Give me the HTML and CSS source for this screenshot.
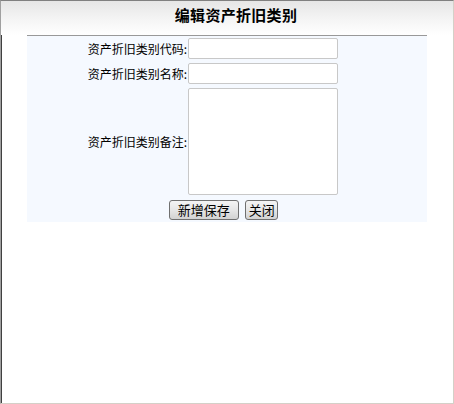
FILE: index.html
```html
<!DOCTYPE html>
<html lang="zh-CN">
<head>
  <meta charset="UTF-8" />
  <title>编辑资产折旧类别</title>
  <link rel="stylesheet" href="styles.css">
</head>
<body>
  <div class="frame">
    <div class="title-bar">编辑资产折旧类别</div>

    <table class="edit-table">
      <tr>
        <td class="label">资产折旧类别代码:</td>
        <td class="field"><input type="text" class="txt"></td>
      </tr>
      <tr>
        <td class="label">资产折旧类别名称:</td>
        <td class="field"><input type="text" class="txt"></td>
      </tr>
      <tr>
        <td class="label">资产折旧类别备注:</td>
        <td class="field"><textarea class="memo"></textarea></td>
      </tr>
      <tr>
        <td colspan="2" class="actions">
          <button class="btn btn-save">新增保存</button>
          <button class="btn btn-close">关闭</button>
        </td>
      </tr>
    </table>
  </div>
</body>
</html>
```

FILE: styles.css
```css
* {
  box-sizing: border-box;
}

html, body {
  margin: 0;
  padding: 0;
  height: 100%;
  background: #fff;
}

body {
  font-family: "Noto Sans CJK SC", "DejaVu Sans", sans-serif;
  font-size: 12px;
  color: #000;
}

.frame {
  height: 404px;
  border-top: 1px solid #808080;
  border-left: 1px solid #a0a0a0;
  border-right: 1px solid #d4d0c8;
  border-bottom: 1px solid #d4d0c8;
  box-shadow: inset 1px 1px 0 #404040;
}

.title-bar {
  height: 34px;
  padding: 4px 0 0 18px;
  text-align: center;
  font-size: 15px;
  font-weight: bold;
  line-height: 20px;
  letter-spacing: 0.3px;
  background: linear-gradient(to bottom, #e6e6e6 0%, #f6f6f6 60%, #fff 100%);
}

.edit-table {
  width: 400px;
  margin: 0 auto;
  border-collapse: collapse;
  border-top: 1px solid #999;
  background: #f5f9ff;
}

.edit-table td {
  padding: 0;
}

.label {
  width: 160px;
  text-align: right;
  vertical-align: middle;
  line-height: 16px;
}

.field {
  padding: 2px 0 2px 1px !important;
}

.txt {
  display: block;
  width: 150px;
  height: 21px;
  margin: 0;
  border: 1px solid #c8c8c8;
  border-radius: 2px;
  background: #fff;
}

.memo {
  display: block;
  width: 150px;
  height: 107px;
  margin: 0;
  border: 1px solid #c8c8c8;
  border-radius: 2px;
  background: #fff;
  resize: none;
}

.actions {
  text-align: center;
  padding: 3px 7px 2px 0 !important;
}

.btn {
  height: 20px;
  padding: 0 5px;
  margin: 0 2px;
  font-family: "Noto Sans CJK SC", sans-serif;
  font-size: 12px;
  line-height: 16px;
  color: #000;
  border: 1px solid #707070;
  border-radius: 3px;
  background: linear-gradient(to bottom, #f4f4f4 0%, #e6e6e6 50%, #d2d2d2 100%);
}

.btn-save {
  width: 70px;
  font-size: 13px;
}

.btn-close {
  width: 33px;
  padding: 0;
  font-size: 13px;
}
```
